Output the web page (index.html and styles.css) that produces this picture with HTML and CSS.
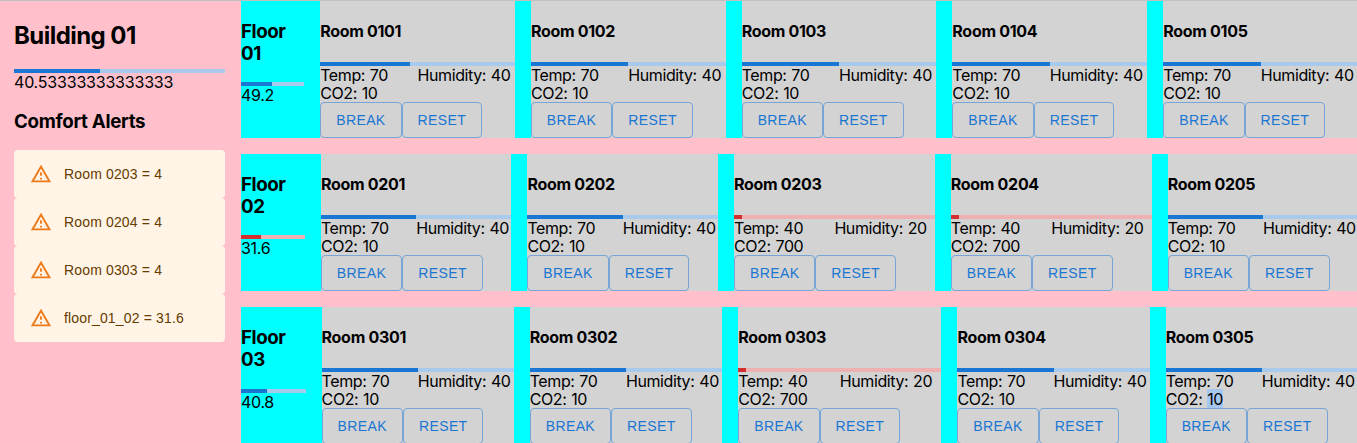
FILE: index.html
```
<!DOCTYPE html>
<html lang="en">
<head>
<meta charset="utf-8">
<title>Building 01</title>
<link rel="stylesheet" href="styles.css">
</head>
<body>
<div class="app">
<aside class="sidebar">
  <h2 class="building-title">Building 01</h2>
  <div class="bar"><div class="fill" style="width:40.53%"></div></div>
  <div class="score building-score">40.53333333333333</div>
  <h3 class="alerts-title">Comfort Alerts</h3>
  <div class="alert"><svg class="icon" viewBox="0 0 24 24"><path d="M12 5.99L19.53 19H4.47L12 5.99M12 2L1 21h22L12 2zm1 14h-2v2h2v-2zm0-6h-2v4h2v-4z"/></svg><span>Room 0203 = 4</span></div>
  <div class="alert"><svg class="icon" viewBox="0 0 24 24"><path d="M12 5.99L19.53 19H4.47L12 5.99M12 2L1 21h22L12 2zm1 14h-2v2h2v-2zm0-6h-2v4h2v-4z"/></svg><span>Room 0204 = 4</span></div>
  <div class="alert"><svg class="icon" viewBox="0 0 24 24"><path d="M12 5.99L19.53 19H4.47L12 5.99M12 2L1 21h22L12 2zm1 14h-2v2h2v-2zm0-6h-2v4h2v-4z"/></svg><span>Room 0303 = 4</span></div>
  <div class="alert"><svg class="icon" viewBox="0 0 24 24"><path d="M12 5.99L19.53 19H4.47L12 5.99M12 2L1 21h22L12 2zm1 14h-2v2h2v-2zm0-6h-2v4h2v-4z"/></svg><span>floor_01_02 = 31.6</span></div>
</aside>
<main class="floors">
  <section class="floor floor-1">
    <div class="floor-info"><h3 class="floor-title">Floor<br>01</h3><div class="bar"><div class="fill" style="width:49.2%"></div></div><div class="score">49.2</div></div>
    <article class="room"><h4 class="room-title">Room 0101</h4><div class="bar"><div class="fill" style="width:46%"></div></div><div class="stats"><span>Temp: 70</span><span>Humidity: 40</span><span>CO2: 10</span></div><div class="actions"><button class="btn btn-break">BREAK</button><button class="btn btn-reset">RESET</button></div></article>
    <article class="room"><h4 class="room-title">Room 0102</h4><div class="bar"><div class="fill" style="width:50%"></div></div><div class="stats"><span>Temp: 70</span><span>Humidity: 40</span><span>CO2: 10</span></div><div class="actions"><button class="btn btn-break">BREAK</button><button class="btn btn-reset">RESET</button></div></article>
    <article class="room"><h4 class="room-title">Room 0103</h4><div class="bar"><div class="fill" style="width:50%"></div></div><div class="stats"><span>Temp: 70</span><span>Humidity: 40</span><span>CO2: 10</span></div><div class="actions"><button class="btn btn-break">BREAK</button><button class="btn btn-reset">RESET</button></div></article>
    <article class="room"><h4 class="room-title">Room 0104</h4><div class="bar"><div class="fill" style="width:50%"></div></div><div class="stats"><span>Temp: 70</span><span>Humidity: 40</span><span>CO2: 10</span></div><div class="actions"><button class="btn btn-break">BREAK</button><button class="btn btn-reset">RESET</button></div></article>
    <article class="room"><h4 class="room-title">Room 0105</h4><div class="bar"><div class="fill" style="width:50%"></div></div><div class="stats"><span>Temp: 70</span><span>Humidity: 40</span><span>CO2: 10</span></div><div class="actions"><button class="btn btn-break">BREAK</button><button class="btn btn-reset">RESET</button></div></article>
  </section>
  <section class="floor floor-2">
    <div class="floor-info"><h3 class="floor-title">Floor<br>02</h3><div class="bar low"><div class="fill" style="width:31.6%"></div></div><div class="score">31.6</div></div>
    <article class="room"><h4 class="room-title">Room 0201</h4><div class="bar"><div class="fill" style="width:50%"></div></div><div class="stats"><span>Temp: 70</span><span>Humidity: 40</span><span>CO2: 10</span></div><div class="actions"><button class="btn btn-break">BREAK</button><button class="btn btn-reset">RESET</button></div></article>
    <article class="room"><h4 class="room-title">Room 0202</h4><div class="bar"><div class="fill" style="width:50%"></div></div><div class="stats"><span>Temp: 70</span><span>Humidity: 40</span><span>CO2: 10</span></div><div class="actions"><button class="btn btn-break">BREAK</button><button class="btn btn-reset">RESET</button></div></article>
    <article class="room"><h4 class="room-title">Room 0203</h4><div class="bar low"><div class="fill" style="width:4%"></div></div><div class="stats"><span>Temp: 40</span><span>Humidity: 20</span><span>CO2: 700</span></div><div class="actions"><button class="btn btn-break">BREAK</button><button class="btn btn-reset">RESET</button></div></article>
    <article class="room"><h4 class="room-title">Room 0204</h4><div class="bar low"><div class="fill" style="width:4%"></div></div><div class="stats"><span>Temp: 40</span><span>Humidity: 20</span><span>CO2: 700</span></div><div class="actions"><button class="btn btn-break">BREAK</button><button class="btn btn-reset">RESET</button></div></article>
    <article class="room"><h4 class="room-title">Room 0205</h4><div class="bar"><div class="fill" style="width:50%"></div></div><div class="stats"><span>Temp: 70</span><span>Humidity: 40</span><span>CO2: 10</span></div><div class="actions"><button class="btn btn-break">BREAK</button><button class="btn btn-reset">RESET</button></div></article>
  </section>
  <section class="floor floor-3">
    <div class="floor-info"><h3 class="floor-title">Floor<br>03</h3><div class="bar"><div class="fill" style="width:40.8%"></div></div><div class="score">40.8</div></div>
    <article class="room"><h4 class="room-title">Room 0301</h4><div class="bar"><div class="fill" style="width:50%"></div></div><div class="stats"><span>Temp: 70</span><span>Humidity: 40</span><span>CO2: 10</span></div><div class="actions"><button class="btn btn-break">BREAK</button><button class="btn btn-reset">RESET</button></div></article>
    <article class="room"><h4 class="room-title">Room 0302</h4><div class="bar"><div class="fill" style="width:50%"></div></div><div class="stats"><span>Temp: 70</span><span>Humidity: 40</span><span>CO2: 10</span></div><div class="actions"><button class="btn btn-break">BREAK</button><button class="btn btn-reset">RESET</button></div></article>
    <article class="room"><h4 class="room-title">Room 0303</h4><div class="bar low"><div class="fill" style="width:4%"></div></div><div class="stats"><span>Temp: 40</span><span>Humidity: 20</span><span>CO2: 700</span></div><div class="actions"><button class="btn btn-break">BREAK</button><button class="btn btn-reset">RESET</button></div></article>
    <article class="room"><h4 class="room-title">Room 0304</h4><div class="bar"><div class="fill" style="width:50%"></div></div><div class="stats"><span>Temp: 70</span><span>Humidity: 40</span><span>CO2: 10</span></div><div class="actions"><button class="btn btn-break">BREAK</button><button class="btn btn-reset">RESET</button></div></article>
    <article class="room"><h4 class="room-title">Room 0305</h4><div class="bar"><div class="fill" style="width:50%"></div></div><div class="stats"><span>Temp: 70</span><span>Humidity: 40</span><span>CO2: <mark class="selected">10</mark></span></div><div class="actions"><button class="btn btn-break">BREAK</button><button class="btn btn-reset">RESET</button></div></article>
  </section>
</main>
</div>
</body>
</html>
```
FILE: styles.css
```
* { box-sizing: border-box; }
body {
  margin: 0;
  height: 443px;
  overflow: hidden;
  background: pink;
  color: #000;
  font: 16px/18px Inter, "Liberation Sans", sans-serif;
  letter-spacing: -0.45px;
}
h2, h3, h4 { margin: 0; font-weight: 700; }
.app {
  display: grid;
  grid-template-columns: 241px 1117px;
  height: 443px;
  overflow: hidden;
  border-top: 1px solid #c0c0c0;
}

.sidebar { padding: 21px 16px 0 14px; }
.building-title { font-size: 24px; line-height: 28px; letter-spacing: -0.55px; margin-bottom: 19px; }
.building-score { letter-spacing: -0.2px; }
.alerts-title { font-size: 18.72px; line-height: 22px; letter-spacing: -0.3px; margin: 20px 0 17px; }
.alert {
  display: flex;
  align-items: center;
  gap: 12px;
  height: 48px;
  padding: 0 16px;
  border-radius: 4px;
  background: #fff4e5;
  color: #663c00;
  font: 14px/20px "Liberation Sans", Arial, sans-serif;
  letter-spacing: 0.15px;
}
.icon { width: 22px; height: 22px; fill: #ed6c02; opacity: 0.9; }

.bar { height: 4px; background: #a7caed; }
.fill { height: 4px; background: #1976d2; }
.low { background: #eeb0b0; }
.low .fill { background: #d32f2f; }

.floors { display: flex; flex-direction: column; gap: 16px; }
.floor { display: grid; column-gap: 16px; height: 137.2px; flex: none; background: cyan; }
.floor-1 { grid-template-columns: 63.2px 194.7px 194.8px 194.7px 194.9px 195px; }
.floor-2 { grid-template-columns: 63.9px 190.5px 190.6px 200.8px 200.9px 190.5px; }
.floor-3 { grid-template-columns: 64.6px 192.1px 192.5px 203.2px 192.3px 192.1px; }
.floor-info { padding-top: 20px; }
.floor-info .score { letter-spacing: -0.3px; }
.floor-title { font-size: 18.72px; line-height: 22px; letter-spacing: -0.45px; margin-bottom: 17.2px; }

.room { background: lightgray; padding-top: 21px; }
.room-title { font-size: 16px; line-height: 18px; letter-spacing: -0.3px; margin-bottom: 22px; }
.stats { display: grid; grid-template-columns: 1fr 1fr; white-space: nowrap; letter-spacing: -0.4px; word-spacing: 0.7px; }
.selected { background: #a5c7f0; color: inherit; }
.actions { display: flex; }
.btn {
  height: 36px;
  padding: 0;
  border: 1px solid #76a5d6;
  border-radius: 4px;
  background: transparent;
  color: #1976d2;
  font: 14px/24px "Liberation Sans", Arial, sans-serif;
  letter-spacing: 0.4px;
}
.btn-break { width: 81.4px; }
.btn-reset { width: 80.5px; }
```
